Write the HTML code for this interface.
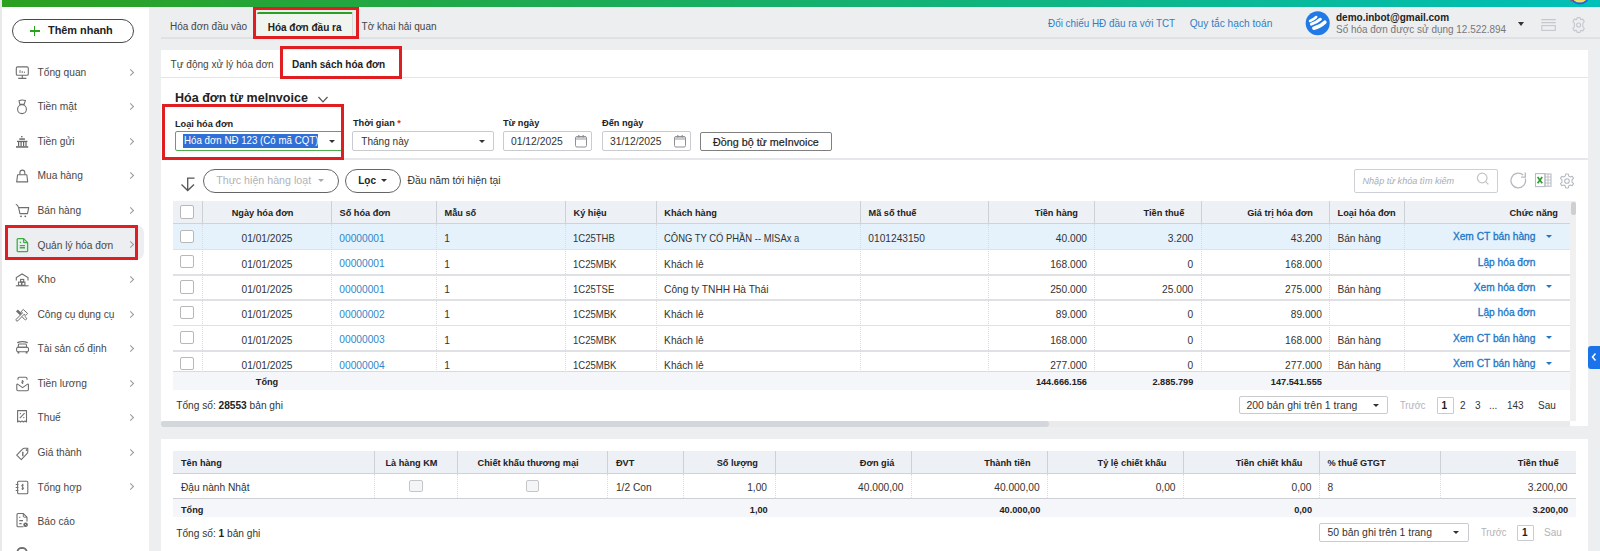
<!DOCTYPE html>
<html><head><meta charset="utf-8">
<style>
*{box-sizing:border-box}
html,body{margin:0;padding:0}
body{width:1600px;height:551px;overflow:hidden;position:relative;background:#edeef0;font-family:"Liberation Sans",sans-serif;color:#212121;font-size:10px}
.a{position:absolute;white-space:nowrap}
.b{font-weight:bold}
#strip{left:0;top:0;width:2px;height:551px;background:#e9e9eb}
#topbar{left:2px;top:0;width:1598px;height:6.6px;background:linear-gradient(90deg,#2ca01f,#00c0b8)}
#side{left:2px;top:7px;width:147px;height:544px;background:#fff}
.hdrline{left:149px;top:37px;width:1451px;height:2px;background:#dfe1e4}
.panel{background:#fff}
.red{border:3px solid #e01e22}
.nav{left:37.5px;font-size:10.2px;color:#474747;line-height:12px}
.chev{left:128.3px;width:5.2px;height:5.2px;border-right:1.1px solid #9a9a9a;border-top:1.1px solid #9a9a9a;transform:rotate(45deg)}
.ico{left:15px;width:14px;height:14px}
.lbl{font-size:9.2px;line-height:12px;color:#222}
.inp{height:19.6px;border:1px solid #c8cbd0;border-radius:2px;background:#fff}
.tri{width:0;height:0;border-left:3px solid transparent;border-right:3px solid transparent;border-top:3.5px solid #333}
.cal{width:12.5px;height:12px;border:1.2px solid #8a8d92;border-top-width:2.6px;border-radius:2px}
.th{top:207.8px;font-size:9.2px;line-height:12px;font-weight:bold;color:#222}
.td{font-size:10.2px;line-height:12px;color:#333}
.lnk{color:#2f87c8}
.act{color:#2176c6;-webkit-text-stroke:0.3px #2176c6}
.cb{width:13.5px;height:13.3px;border:1px solid #b8b8b8;border-radius:2px;background:#fff}
.vd{width:1px;border-left:1px dotted #d9dbde}
.tf{font-size:9.2px;line-height:12px;font-weight:bold;color:#222}
.cb2{width:13.6px;height:12.8px;border:1px solid #c4c6ca;border-radius:2px;background:#f4f5f7}
</style></head><body>
<div id="strip" class="a"></div>
<div id="topbar" class="a"></div>
<div id="side" class="a"></div>
<!-- white panel 1 -->
<div class="a panel" style="left:161px;top:50px;width:1427px;height:371px"></div>
<!-- white panel 2 -->
<div class="a panel" style="left:161px;top:439px;width:1427px;height:112px"></div>


<!-- quick add button -->
<div class="a" style="left:12px;top:19px;width:122px;height:24px;border:1.2px solid #4a4a4a;border-radius:12px"></div>
<div class="a b" style="left:48px;top:23px;font-size:10.9px;line-height:14px;color:#222">Thêm nhanh</div>
<div class="a" style="left:30px;top:30.3px;width:9.7px;height:1.3px;background:#2ca01f"></div>
<div class="a" style="left:34.2px;top:26.1px;width:1.3px;height:9.7px;background:#2ca01f"></div>

<!-- sidebar nav -->
<div class="a" style="left:5px;top:224.5px;width:139px;height:35.5px;background:#eceef1;border-radius:0 8px 8px 0"></div>
<div class="a nav" style="top:66.7px">Tổng quan</div>
<div class="a chev" style="top:69.6px"></div>
<div class="a nav" style="top:101.3px">Tiền mặt</div>
<div class="a chev" style="top:104.2px"></div>
<div class="a nav" style="top:135.8px">Tiền gửi</div>
<div class="a chev" style="top:138.7px"></div>
<div class="a nav" style="top:170.4px">Mua hàng</div>
<div class="a chev" style="top:173.3px"></div>
<div class="a nav" style="top:205.0px">Bán hàng</div>
<div class="a chev" style="top:207.9px"></div>
<div class="a nav" style="top:239.5px">Quản lý hóa đơn</div>
<div class="a chev" style="top:242.4px"></div>
<div class="a nav" style="top:274.1px">Kho</div>
<div class="a chev" style="top:277.0px"></div>
<div class="a nav" style="top:308.7px">Công cụ dụng cụ</div>
<div class="a chev" style="top:311.6px"></div>
<div class="a nav" style="top:343.3px">Tài sản cố định</div>
<div class="a chev" style="top:346.2px"></div>
<div class="a nav" style="top:377.8px">Tiền lương</div>
<div class="a chev" style="top:380.7px"></div>
<div class="a nav" style="top:412.4px">Thuế</div>
<div class="a chev" style="top:415.3px"></div>
<div class="a nav" style="top:447.0px">Giá thành</div>
<div class="a chev" style="top:449.9px"></div>
<div class="a nav" style="top:481.5px">Tổng hợp</div>
<div class="a chev" style="top:484.4px"></div>
<div class="a nav" style="top:516.1px">Báo cáo</div>
<div class="a nav" style="top:550.7px">Hệ thống</div>
<div class="a red" style="left:5px;top:225px;width:133px;height:35px"></div>

<!-- header line -->
<div class="a" style="left:161px;top:37px;width:1439px;height:2px;background:#dfe1e4"></div>
<!-- top tabs -->
<div class="a" style="left:170px;top:20.5px;font-size:10px;line-height:12px;color:#444">Hóa đơn đầu vào</div>
<div class="a" style="left:257px;top:12px;width:96px;height:26px;background:#f1f5ef;border-right:1px solid #d8dcd8;border-top:2px solid #2ca01f;border-radius:2px 2px 0 0"></div>
<div class="a b" style="left:267.7px;top:22.2px;font-size:10px;line-height:12px;color:#222">Hóa đơn đầu ra</div>
<div class="a" style="left:361.6px;top:20.5px;font-size:10px;line-height:12px;color:#444">Tờ khai hải quan</div>
<div class="a red" style="left:253px;top:6.5px;width:106px;height:32.5px"></div>
<!-- top right -->
<div class="a" style="left:1048px;top:17.5px;font-size:10.2px;line-height:12px;color:#2f7fc4;transform:scaleX(0.97);transform-origin:0 0">Đối chiếu HĐ đầu ra với TCT</div>
<div class="a" style="left:1189.7px;top:17.5px;font-size:10.2px;line-height:12px;color:#2f7fc4">Quy tắc hạch toán</div>
<div class="a b" style="left:1336px;top:11.8px;font-size:10px;line-height:12px;color:#222">demo.inbot@gmail.com</div>
<div class="a" style="left:1336px;top:23.5px;font-size:10.2px;line-height:12px;color:#777;transform:scaleX(0.976);transform-origin:0 0">Số hóa đơn được sử dụng 12.522.894</div>
<div class="a" style="left:1518.3px;top:21.6px;width:0;height:0;border-left:3px solid transparent;border-right:3px solid transparent;border-top:4px solid #333"></div>

<!-- sub tabs -->
<div class="a" style="left:161px;top:77px;width:1427px;height:1px;background:#e3e5e8"></div>
<div class="a" style="left:170.6px;top:58.5px;font-size:10.08px;line-height:12px;color:#444">Tự động xử lý hóa đơn</div>
<div class="a b" style="left:292px;top:58.7px;font-size:10px;line-height:12px;color:#222">Danh sách hóa đơn</div>
<div class="a red" style="left:280px;top:46px;width:121.5px;height:32.5px"></div>




<!-- filter section -->
<div class="a b" style="left:175px;top:92.2px;font-size:12.54px;line-height:12px;color:#222">Hóa đơn từ meInvoice</div>
<svg class="a" style="left:317px;top:95px" width="12" height="9" viewBox="0 0 12 9"><path d="M1.5 2 L6 6.8 L10.5 2" fill="none" stroke="#555" stroke-width="1.2"/></svg>
<div class="a" style="left:343px;top:158px;width:1245px;height:1.5px;background:#e6e7ea"></div>

<div class="a b lbl" style="left:175px;top:117.5px">Loại hóa đơn</div>
<div class="a" style="left:174.5px;top:131.2px;width:168px;height:19.8px;border:1px solid #4cb050;border-radius:2px;background:#fff"></div>
<div class="a" style="left:183px;top:134.4px;width:134.7px;height:13.4px;background:#2f6fd6"></div>
<div class="a" style="left:183.5px;top:135.3px;font-size:10.2px;line-height:12px;color:#fff;transform:scaleX(0.954);transform-origin:0 0">Hóa đơn NĐ 123 (Có mã CQT)</div>
<div class="a tri" style="left:329px;top:139.5px"></div>
<div class="a red" style="left:162px;top:104px;width:182px;height:56px"></div>

<div class="a b lbl" style="left:353px;top:117.3px">Thời gian <span style="color:#e5232a">*</span></div>
<div class="a inp" style="left:352.4px;top:131.2px;width:141.2px"></div>
<div class="a" style="left:361.3px;top:135.5px;font-size:10.05px;line-height:12px;color:#333">Tháng này</div>
<div class="a tri" style="left:478.6px;top:139.5px"></div>

<div class="a b lbl" style="left:503px;top:117.3px">Từ ngày</div>
<div class="a inp" style="left:502.7px;top:131.2px;width:89.3px"></div>
<div class="a" style="left:511px;top:135.8px;font-size:10.34px;line-height:12px;color:#333">01/12/2025</div>
<svg class="a" style="left:574px;top:134px" width="14" height="14" viewBox="0 0 14 14"><rect x="1.5" y="2.5" width="11" height="10.5" rx="1.5" fill="#fff" stroke="#8e9096" stroke-width="1"/><rect x="2" y="3" width="10" height="3" fill="#c9cbcf"/><path d="M4.8 1 V3.6 M9.2 1 V3.6" stroke="#8e9096" stroke-width="1.2"/></svg>

<div class="a b lbl" style="left:602px;top:117.3px">Đến ngày</div>
<div class="a inp" style="left:601.6px;top:131.2px;width:89.4px"></div>
<div class="a" style="left:609.9px;top:135.8px;font-size:10.34px;line-height:12px;color:#333">31/12/2025</div>
<svg class="a" style="left:672.5px;top:134px" width="14" height="14" viewBox="0 0 14 14"><rect x="1.5" y="2.5" width="11" height="10.5" rx="1.5" fill="#fff" stroke="#8e9096" stroke-width="1"/><rect x="2" y="3" width="10" height="3" fill="#c9cbcf"/><path d="M4.8 1 V3.6 M9.2 1 V3.6" stroke="#8e9096" stroke-width="1.2"/></svg>

<div class="a" style="left:700px;top:132px;width:132px;height:19.3px;border:1px solid #808080;border-radius:2px"></div>
<div class="a" style="left:713px;top:136px;font-size:10.75px;line-height:12px;color:#222;-webkit-text-stroke:0.2px #222">Đồng bộ từ meInvoice</div>


<!-- toolbar -->
<svg class="a" style="left:180px;top:176px" width="16" height="16" viewBox="0 0 16 16"><path d="M14.5 2.2 H7.7 V14.5 M1.5 8.5 L7.7 14.5 L14 8.5" fill="none" stroke="#555" stroke-width="1.3"/></svg>
<div class="a" style="left:203.2px;top:168.7px;width:135.5px;height:24px;border:1px solid #666;border-radius:12px"></div>
<div class="a" style="left:216.2px;top:174.2px;font-size:10.68px;line-height:12px;color:#b0b3b8">Thực hiện hàng loạt</div>
<div class="a tri" style="left:318px;top:179.2px;border-top-color:#aaa"></div>
<div class="a" style="left:345.2px;top:168.7px;width:55.8px;height:24px;border:1px solid #666;border-radius:12px"></div>
<div class="a b" style="left:358.2px;top:174.5px;font-size:10px;line-height:12px;color:#222">Lọc</div>
<div class="a tri" style="left:381px;top:179.2px"></div>
<div class="a" style="left:407.5px;top:174.5px;font-size:10.37px;line-height:12px;color:#333">Đầu năm tới hiện tại</div>

<div class="a" style="left:1353.6px;top:168.6px;width:144.2px;height:24.2px;border:1px solid #cdd0d5;border-radius:2px"></div>
<div class="a" style="left:1362.5px;top:174.5px;font-size:9.1px;line-height:12px;color:#a9adb3;font-style:italic">Nhập từ khóa tìm kiếm</div>
<svg class="a" style="left:1475px;top:171px" width="16" height="16" viewBox="0 0 16 16"><circle cx="7.2" cy="7" r="4.8" fill="none" stroke="#c3c3c3" stroke-width="1.2"/><path d="M10.6 10.6 L13.4 13.4" stroke="#c3c3c3" stroke-width="1.2"/></svg>
<svg class="a" style="left:1509px;top:171px" width="19" height="19" viewBox="0 0 19 19"><path d="M16.3 7.5 A7.3 7.3 0 1 1 14.2 4.1" fill="none" stroke="#b5bac2" stroke-width="1.3"/><path d="M16.3 1.6 V6.2 H12" fill="none" stroke="#b5bac2" stroke-width="1.3"/></svg>
<svg class="a" style="left:1534px;top:172px" width="18" height="16" viewBox="0 0 18 16"><rect x="1.5" y="1.6" width="9.5" height="13" fill="#fff" stroke="#b8bcc3" stroke-width="1.1"/><rect x="11" y="2" width="6" height="12.2" fill="none" stroke="#b8bcc3" stroke-width="1.1"/><path d="M11 5 H17 M11 8 H17 M11 11 H17 M14 2 V14.2" stroke="#b8bcc3" stroke-width="0.9"/><path d="M3.6 5 L8.2 11.2 M8.2 5 L3.6 11.2" stroke="#2aa02a" stroke-width="1.7"/></svg>
<svg class="a" style="left:1559px;top:172.5px" width="16" height="16" viewBox="0 0 16 16"><path d="M6.7 1 H9.3 L9.7 3 L11.3 3.9 L13.2 3.2 L14.5 5.4 L13 6.8 V9.2 L14.5 10.6 L13.2 12.8 L11.3 12.1 L9.7 13 L9.3 15 H6.7 L6.3 13 L4.7 12.1 L2.8 12.8 L1.5 10.6 L3 9.2 V6.8 L1.5 5.4 L2.8 3.2 L4.7 3.9 L6.3 3 Z" fill="none" stroke="#b5bac2" stroke-width="1.1" stroke-linejoin="round"/><circle cx="8" cy="8" r="2.3" fill="none" stroke="#b5bac2" stroke-width="1.1"/></svg>
<!--T1S-->
<!-- main table -->
<div class="a" style="left:173px;top:201px;width:1397px;height:23px;background:#edf0f4;border-bottom:1px solid #cfd2d7"></div>
<div class="a" style="left:173px;top:224px;width:1397px;height:24.8px;background:#e5f2fc"></div>
<div class="a" style="left:173px;top:248.60px;width:1397px;height:1.6px;background:#dfe1e4"></div>
<div class="a" style="left:173px;top:274.00px;width:1397px;height:1.6px;background:#dfe1e4"></div>
<div class="a" style="left:173px;top:299.40px;width:1397px;height:1.6px;background:#dfe1e4"></div>
<div class="a" style="left:173px;top:324.80px;width:1397px;height:1.6px;background:#dfe1e4"></div>
<div class="a" style="left:173px;top:350.20px;width:1397px;height:1.6px;background:#dfe1e4"></div>
<div class="a" style="left:202.0px;top:201px;width:1px;height:22px;background:#cdd1d6"></div>
<div class="a vd" style="left:202.0px;top:224px;height:147.7px"></div>
<div class="a" style="left:331.0px;top:201px;width:1px;height:22px;background:#cdd1d6"></div>
<div class="a vd" style="left:331.0px;top:224px;height:147.7px"></div>
<div class="a" style="left:436.0px;top:201px;width:1px;height:22px;background:#cdd1d6"></div>
<div class="a vd" style="left:436.0px;top:224px;height:147.7px"></div>
<div class="a" style="left:565.0px;top:201px;width:1px;height:22px;background:#cdd1d6"></div>
<div class="a vd" style="left:565.0px;top:224px;height:147.7px"></div>
<div class="a" style="left:655.8px;top:201px;width:1px;height:22px;background:#cdd1d6"></div>
<div class="a vd" style="left:655.8px;top:224px;height:147.7px"></div>
<div class="a" style="left:860.0px;top:201px;width:1px;height:22px;background:#cdd1d6"></div>
<div class="a vd" style="left:860.0px;top:224px;height:147.7px"></div>
<div class="a" style="left:988.1px;top:201px;width:1px;height:22px;background:#cdd1d6"></div>
<div class="a vd" style="left:988.1px;top:224px;height:147.7px"></div>
<div class="a" style="left:1094.2px;top:201px;width:1px;height:22px;background:#cdd1d6"></div>
<div class="a vd" style="left:1094.2px;top:224px;height:147.7px"></div>
<div class="a" style="left:1200.5px;top:201px;width:1px;height:22px;background:#cdd1d6"></div>
<div class="a vd" style="left:1200.5px;top:224px;height:147.7px"></div>
<div class="a" style="left:1329.1px;top:201px;width:1px;height:22px;background:#cdd1d6"></div>
<div class="a vd" style="left:1329.1px;top:224px;height:147.7px"></div>
<div class="a" style="left:1403.9px;top:201px;width:1px;height:22px;background:#cdd1d6"></div>
<div class="a vd" style="left:1403.9px;top:224px;height:147.7px"></div>
<div class="a th" style="left:202.5px;width:120.0px;text-align:center;top:206.9px">Ngày hóa đơn</div>
<div class="a th" style="left:339.5px;top:206.9px">Số hóa đơn</div>
<div class="a th" style="left:444.5px;top:206.9px">Mẫu số</div>
<div class="a th" style="left:573.5px;top:206.9px">Ký hiệu</div>
<div class="a th" style="left:664.3px;top:206.9px">Khách hàng</div>
<div class="a th" style="left:868.5px;top:206.9px">Mã số thuế</div>
<div class="a th" style="left:988.6px;width:89.4px;text-align:right;top:206.9px">Tiền hàng</div>
<div class="a th" style="left:1094.7px;width:89.6px;text-align:right;top:206.9px">Tiền thuế</div>
<div class="a th" style="left:1201.0px;width:111.9px;text-align:right;top:206.9px">Giá trị hóa đơn</div>
<div class="a th" style="left:1337.6px;top:206.9px">Loại hóa đơn</div>
<div class="a th" style="left:1404.4px;width:153.6px;text-align:right;top:206.9px">Chức năng</div>
<div class="a cb" style="left:180.2px;top:205.3px"></div>
<div class="a cb" style="left:180.2px;top:229.5px"></div>
<div class="a td" style="left:202.5px;width:129.0px;text-align:center;top:233.2px">01/01/2025</div>
<div class="a td lnk" style="left:339.3px;top:232.7px;">00000001</div>
<div class="a td" style="left:444.3px;top:233.2px;">1</div>
<div class="a td" style="left:573.3px;top:233.2px;transform:scaleX(0.935);transform-origin:0 0;">1C25THB</div>
<div class="a td" style="left:664.1px;top:233.2px;transform:scaleX(0.925);transform-origin:0 0;">CÔNG TY CỔ PHẦN -- MISAx a</div>
<div class="a td" style="left:868.3px;top:233.2px;">0101243150</div>
<div class="a td" style="left:988.6px;width:98.4px;text-align:right;top:233.2px">40.000</div>
<div class="a td" style="left:1094.7px;width:98.6px;text-align:right;top:233.2px">3.200</div>
<div class="a td" style="left:1201.0px;width:120.9px;text-align:right;top:233.2px">43.200</div>
<div class="a td" style="left:1337.4px;top:233.2px;">Bán hàng</div>
<div class="a td act" style="left:1404.4px;width:131.0px;text-align:right;top:231.2px">Xem CT bán hàng</div>
<div class="a tri" style="left:1546.4px;top:234.5px;border-top-color:#2176c6;border-left-width:3px;border-right-width:3px;border-top-width:3.6px"></div>
<div class="a cb" style="left:180.2px;top:254.9px"></div>
<div class="a td" style="left:202.5px;width:129.0px;text-align:center;top:258.6px">01/01/2025</div>
<div class="a td lnk" style="left:339.3px;top:258.1px;">00000001</div>
<div class="a td" style="left:444.3px;top:258.6px;">1</div>
<div class="a td" style="left:573.3px;top:258.6px;transform:scaleX(0.935);transform-origin:0 0;">1C25MBK</div>
<div class="a td" style="left:664.1px;top:258.6px;">Khách lẻ</div>
<div class="a td" style="left:988.6px;width:98.4px;text-align:right;top:258.6px">168.000</div>
<div class="a td" style="left:1094.7px;width:98.6px;text-align:right;top:258.6px">0</div>
<div class="a td" style="left:1201.0px;width:120.9px;text-align:right;top:258.6px">168.000</div>
<div class="a td act" style="left:1404.4px;width:131.0px;text-align:right;top:256.6px">Lập hóa đơn</div>
<div class="a cb" style="left:180.2px;top:280.3px"></div>
<div class="a td" style="left:202.5px;width:129.0px;text-align:center;top:284.0px">01/01/2025</div>
<div class="a td lnk" style="left:339.3px;top:283.5px;">00000001</div>
<div class="a td" style="left:444.3px;top:284.0px;">1</div>
<div class="a td" style="left:573.3px;top:284.0px;transform:scaleX(0.935);transform-origin:0 0;">1C25TSE</div>
<div class="a td" style="left:664.1px;top:284.0px;">Công ty TNHH Hà Thái</div>
<div class="a td" style="left:988.6px;width:98.4px;text-align:right;top:284.0px">250.000</div>
<div class="a td" style="left:1094.7px;width:98.6px;text-align:right;top:284.0px">25.000</div>
<div class="a td" style="left:1201.0px;width:120.9px;text-align:right;top:284.0px">275.000</div>
<div class="a td" style="left:1337.4px;top:284.0px;">Bán hàng</div>
<div class="a td act" style="left:1404.4px;width:131.0px;text-align:right;top:282.0px">Xem hóa đơn</div>
<div class="a tri" style="left:1546.4px;top:285.3px;border-top-color:#2176c6;border-left-width:3px;border-right-width:3px;border-top-width:3.6px"></div>
<div class="a cb" style="left:180.2px;top:305.7px"></div>
<div class="a td" style="left:202.5px;width:129.0px;text-align:center;top:309.4px">01/01/2025</div>
<div class="a td lnk" style="left:339.3px;top:308.9px;">00000002</div>
<div class="a td" style="left:444.3px;top:309.4px;">1</div>
<div class="a td" style="left:573.3px;top:309.4px;transform:scaleX(0.935);transform-origin:0 0;">1C25MBK</div>
<div class="a td" style="left:664.1px;top:309.4px;">Khách lẻ</div>
<div class="a td" style="left:988.6px;width:98.4px;text-align:right;top:309.4px">89.000</div>
<div class="a td" style="left:1094.7px;width:98.6px;text-align:right;top:309.4px">0</div>
<div class="a td" style="left:1201.0px;width:120.9px;text-align:right;top:309.4px">89.000</div>
<div class="a td act" style="left:1404.4px;width:131.0px;text-align:right;top:307.4px">Lập hóa đơn</div>
<div class="a cb" style="left:180.2px;top:331.1px"></div>
<div class="a td" style="left:202.5px;width:129.0px;text-align:center;top:334.8px">01/01/2025</div>
<div class="a td lnk" style="left:339.3px;top:334.3px;">00000003</div>
<div class="a td" style="left:444.3px;top:334.8px;">1</div>
<div class="a td" style="left:573.3px;top:334.8px;transform:scaleX(0.935);transform-origin:0 0;">1C25MBK</div>
<div class="a td" style="left:664.1px;top:334.8px;">Khách lẻ</div>
<div class="a td" style="left:988.6px;width:98.4px;text-align:right;top:334.8px">168.000</div>
<div class="a td" style="left:1094.7px;width:98.6px;text-align:right;top:334.8px">0</div>
<div class="a td" style="left:1201.0px;width:120.9px;text-align:right;top:334.8px">168.000</div>
<div class="a td" style="left:1337.4px;top:334.8px;">Bán hàng</div>
<div class="a td act" style="left:1404.4px;width:131.0px;text-align:right;top:332.8px">Xem CT bán hàng</div>
<div class="a tri" style="left:1546.4px;top:336.1px;border-top-color:#2176c6;border-left-width:3px;border-right-width:3px;border-top-width:3.6px"></div>
<div class="a cb" style="left:180.2px;top:356.5px"></div>
<div class="a td" style="left:202.5px;width:129.0px;text-align:center;top:360.2px">01/01/2025</div>
<div class="a td lnk" style="left:339.3px;top:359.7px;">00000004</div>
<div class="a td" style="left:444.3px;top:360.2px;">1</div>
<div class="a td" style="left:573.3px;top:360.2px;transform:scaleX(0.935);transform-origin:0 0;">1C25MBK</div>
<div class="a td" style="left:664.1px;top:360.2px;">Khách lẻ</div>
<div class="a td" style="left:988.6px;width:98.4px;text-align:right;top:360.2px">277.000</div>
<div class="a td" style="left:1094.7px;width:98.6px;text-align:right;top:360.2px">0</div>
<div class="a td" style="left:1201.0px;width:120.9px;text-align:right;top:360.2px">277.000</div>
<div class="a td" style="left:1337.4px;top:360.2px;">Bán hàng</div>
<div class="a td act" style="left:1404.4px;width:131.0px;text-align:right;top:358.2px">Xem CT bán hàng</div>
<div class="a tri" style="left:1546.4px;top:361.5px;border-top-color:#2176c6;border-left-width:3px;border-right-width:3px;border-top-width:3.6px"></div>
<div class="a" style="left:173px;top:371px;width:1397px;height:18.5px;background:#f5f6fa;border-top:1.4px solid #d8dadd"></div>
<div class="a tf" style="left:202.5px;width:129px;text-align:center;top:376px">Tổng</div>
<div class="a tf" style="left:988.6px;width:98.4px;text-align:right;top:376px">144.666.156</div>
<div class="a tf" style="left:1094.7px;width:98.6px;text-align:right;top:376px">2.885.799</div>
<div class="a tf" style="left:1201.0px;width:120.9px;text-align:right;top:376px">147.541.555</div>
<div class="a" style="left:1570px;top:201px;width:6px;height:220px;background:#f0f0f0"></div>
<div class="a" style="left:1571px;top:202px;width:4.5px;height:13px;background:#cfcfd2;border-radius:2px"></div>
<!--T1E-->

<!-- summary + pagination -->
<div class="a" style="left:176.2px;top:399.6px;font-size:10.16px;line-height:12px;color:#333">Tổng số: <b style="color:#222">28553</b> bản ghi</div>
<div class="a" style="left:1238.6px;top:395.8px;width:149.4px;height:18.7px;border:1px solid #c8cbd0;border-radius:2px"></div>
<div class="a" style="left:1246.5px;top:399.5px;font-size:10.45px;line-height:12px;color:#333">200 bản ghi trên 1 trang</div>
<div class="a tri" style="left:1372.5px;top:403.5px"></div>
<div class="a" style="left:1400px;top:399.5px;font-size:10.2px;line-height:12px;color:#b0b3b8;transform:scaleX(0.912);transform-origin:0 0">Trước</div>
<div class="a" style="left:1436.6px;top:397px;width:17.4px;height:16.5px;border:1px solid #c8cbd0;border-radius:1px"></div>
<div class="a b" style="left:1441.5px;top:399.5px;font-size:10px;line-height:12px;color:#222">1</div>
<div class="a" style="left:1460px;top:399.5px;font-size:10px;line-height:12px;color:#333">2</div>
<div class="a" style="left:1475px;top:399.5px;font-size:10px;line-height:12px;color:#333">3</div>
<div class="a" style="left:1489px;top:399.5px;font-size:10px;line-height:12px;color:#333">...</div>
<div class="a" style="left:1507px;top:399.5px;font-size:10px;line-height:12px;color:#333">143</div>
<div class="a" style="left:1538px;top:399.5px;font-size:10px;line-height:12px;color:#333">Sau</div>
<!-- hscroll -->
<div class="a" style="left:161px;top:420.8px;width:1409px;height:6px;background:#eaeaea"></div>
<div class="a" style="left:1570px;top:420.8px;width:18px;height:5.4px;background:#fff"></div>
<div class="a" style="left:161px;top:420.8px;width:888px;height:6px;background:#d3d6db;border-radius:3px"></div>
<!-- right blue tab -->
<div class="a" style="left:1588px;top:345.5px;width:12px;height:23.3px;background:#1a73e8;border-radius:3px 0 0 3px"></div>
<svg class="a" style="left:1590px;top:352px" width="8" height="10" viewBox="0 0 8 10"><path d="M5.5 1.5 L2.5 5 L5.5 8.5" fill="none" stroke="#fff" stroke-width="1.5"/></svg>

<!--T2S-->
<!-- detail table -->
<div class="a" style="left:173px;top:451px;width:1402.5px;height:22.6px;background:#edf0f4;border-bottom:1px solid #cfd2d7"></div>
<div class="a" style="left:173px;top:498px;width:1402.5px;height:18.8px;background:#f5f6fa;border-top:1.6px solid #cdd0d4"></div>
<div class="a" style="left:374.1px;top:451px;width:1px;height:21.6px;background:#cdd1d6"></div>
<div class="a vd" style="left:374.1px;top:473.6px;height:24.4px"></div>
<div class="a" style="left:456.8px;top:451px;width:1px;height:21.6px;background:#cdd1d6"></div>
<div class="a vd" style="left:456.8px;top:473.6px;height:24.4px"></div>
<div class="a" style="left:607.4px;top:451px;width:1px;height:21.6px;background:#cdd1d6"></div>
<div class="a vd" style="left:607.4px;top:473.6px;height:24.4px"></div>
<div class="a" style="left:683.3px;top:451px;width:1px;height:21.6px;background:#cdd1d6"></div>
<div class="a vd" style="left:683.3px;top:473.6px;height:24.4px"></div>
<div class="a" style="left:774.5px;top:451px;width:1px;height:21.6px;background:#cdd1d6"></div>
<div class="a vd" style="left:774.5px;top:473.6px;height:24.4px"></div>
<div class="a" style="left:910.9px;top:451px;width:1px;height:21.6px;background:#cdd1d6"></div>
<div class="a vd" style="left:910.9px;top:473.6px;height:24.4px"></div>
<div class="a" style="left:1047.1px;top:451px;width:1px;height:21.6px;background:#cdd1d6"></div>
<div class="a vd" style="left:1047.1px;top:473.6px;height:24.4px"></div>
<div class="a" style="left:1183.0px;top:451px;width:1px;height:21.6px;background:#cdd1d6"></div>
<div class="a vd" style="left:1183.0px;top:473.6px;height:24.4px"></div>
<div class="a" style="left:1318.9px;top:451px;width:1px;height:21.6px;background:#cdd1d6"></div>
<div class="a vd" style="left:1318.9px;top:473.6px;height:24.4px"></div>
<div class="a" style="left:1439.5px;top:451px;width:1px;height:21.6px;background:#cdd1d6"></div>
<div class="a vd" style="left:1439.5px;top:473.6px;height:24.4px"></div>
<div class="a th" style="left:181.0px;top:457.2px">Tên hàng</div>
<div class="a th" style="left:374.6px;width:73.7px;text-align:center;top:457.2px">Là hàng KM</div>
<div class="a th" style="left:457.3px;width:141.6px;text-align:center;top:457.2px">Chiết khấu thương mại</div>
<div class="a th" style="left:615.9px;top:457.2px">ĐVT</div>
<div class="a th" style="left:683.8px;width:74.2px;text-align:right;top:457.2px">Số lượng</div>
<div class="a th" style="left:775.0px;width:119.4px;text-align:right;top:457.2px">Đơn giá</div>
<div class="a th" style="left:911.4px;width:119.2px;text-align:right;top:457.2px">Thành tiền</div>
<div class="a th" style="left:1047.6px;width:118.9px;text-align:right;top:457.2px">Tỷ lệ chiết khấu</div>
<div class="a th" style="left:1183.5px;width:118.9px;text-align:right;top:457.2px">Tiền chiết khấu</div>
<div class="a th" style="left:1327.4px;top:457.2px">% thuế GTGT</div>
<div class="a th" style="left:1440.0px;width:118.5px;text-align:right;top:457.2px">Tiền thuế</div>
<div class="a td" style="left:181.0px;top:482.1px">Đậu nành Nhật</div>
<div class="a cb2" style="left:409.2px;top:479.5px"></div>
<div class="a cb2" style="left:525.8px;top:479.5px"></div>
<div class="a td" style="left:615.9px;top:482.1px">1/2 Con</div>
<div class="a td" style="left:683.8px;width:83.2px;text-align:right;top:482.1px">1,00</div>
<div class="a td" style="left:775.0px;width:128.4px;text-align:right;top:482.1px">40.000,00</div>
<div class="a td" style="left:911.4px;width:128.2px;text-align:right;top:482.1px">40.000,00</div>
<div class="a td" style="left:1047.6px;width:127.9px;text-align:right;top:482.1px">0,00</div>
<div class="a td" style="left:1183.5px;width:127.9px;text-align:right;top:482.1px">0,00</div>
<div class="a td" style="left:1327.4px;top:482.1px">8</div>
<div class="a td" style="left:1440.0px;width:127.5px;text-align:right;top:482.1px">3.200,00</div>
<div class="a tf" style="left:181.0px;top:503.9px">Tổng</div>
<div class="a tf" style="left:683.8px;width:83.9px;text-align:right;top:503.9px">1,00</div>
<div class="a tf" style="left:911.4px;width:128.9px;text-align:right;top:503.9px">40.000,00</div>
<div class="a tf" style="left:1183.5px;width:128.6px;text-align:right;top:503.9px">0,00</div>
<div class="a tf" style="left:1440.0px;width:128.2px;text-align:right;top:503.9px">3.200,00</div>
<div class="a" style="left:176.2px;top:527.8px;font-size:10.16px;line-height:12px;color:#333">Tổng số: <b style="color:#222">1</b> bản ghi</div>
<div class="a" style="left:1318.6px;top:523px;width:150px;height:19.4px;border:1px solid #c8cbd0;border-radius:2px"></div>
<div class="a" style="left:1327.5px;top:527px;font-size:10.38px;line-height:12px;color:#333">50 bản ghi trên 1 trang</div>
<div class="a tri" style="left:1453px;top:531px"></div>
<div class="a" style="left:1481px;top:527px;font-size:10.2px;line-height:12px;color:#b0b3b8;transform:scaleX(0.914);transform-origin:0 0">Trước</div>
<div class="a" style="left:1517px;top:524.5px;width:16.5px;height:16.5px;border:1px solid #c8cbd0;border-radius:1px"></div>
<div class="a b" style="left:1522px;top:527px;font-size:10px;line-height:12px;color:#222">1</div>
<div class="a" style="left:1544px;top:527px;font-size:10px;line-height:12px;color:#b0b3b8">Sau</div>
<!--T2E-->


<!-- sidebar icons -->
<svg class="a" style="left:0;top:0" width="40" height="551" viewBox="0 0 40 551" fill="none" stroke="#6e6e6e" stroke-width="1.1">
<rect x="16.3" y="66.9" width="12" height="8.3" rx="1.3"/>
<path d="M22.3 75.2 V78.2 M18.2 78.4 H26.4"/>
<path d="M20 73 V70 M22.2 73 V71 M24.4 73 V71.6" stroke-width="0.9"/>
<path d="M19 100.8 Q22 99.3 25.4 100.6 L24.1 104.4 H19.9 Z"/>
<circle cx="22" cy="109.2" r="4.4"/>
<g fill="#666" stroke="none">
<rect x="21" y="136.1" width="1.6" height="1.2"/>
<rect x="19.3" y="138.3" width="5.6" height="1.5"/>
<rect x="17" y="140.8" width="10.4" height="1.3"/>
<rect x="18" y="142" width="1.2" height="4.2"/><rect x="20.5" y="142" width="1.2" height="4.2"/><rect x="23" y="142" width="1.2" height="4.2"/><rect x="25.4" y="142" width="1.2" height="4.2"/>
<rect x="16" y="146.2" width="12.2" height="1.5"/>
</g>
<path d="M19.9 174.7 V172.6 A2.45 2.45 0 0 1 24.8 172.6 V174.7"/>
<path d="M17.6 174.8 H26.8 L27.7 181.9 H16.7 Z" stroke-linejoin="round"/>
<path d="M15.8 204.2 Q17.8 204.6 18.6 207.6 L19.9 213.6 H27.5 L28.7 207.6 H18.6" stroke-linejoin="round"/>
<circle cx="21" cy="216.3" r="0.9" fill="#666" stroke="none"/><circle cx="25.3" cy="216.3" r="0.9" fill="#666" stroke="none"/>
<g stroke="#3cb043" stroke-width="1.3">
<path d="M18.1 238.6 H23.6 L27.6 242.6 V250.7 Q27.6 251.6 26.7 251.6 H18.1 Q17.2 251.6 17.2 250.7 V239.5 Q17.2 238.6 18.1 238.6 Z" stroke-linejoin="round"/>
<path d="M23.6 238.6 V241.7 Q23.6 242.6 24.5 242.6 H27.6"/>
<path d="M19.7 245.6 H25 M19.7 247.8 H25" stroke-width="1.4"/>
<path d="M19.8 242.3 H21"/>
</g>
<path d="M16.3 280.4 V277.6 L22.1 274 L28 277.6 V280.4"/>
<rect x="20.6" y="279.4" width="3.1" height="2.7"/>
<rect x="18.5" y="282.1" width="3.2" height="3.2"/><rect x="21.7" y="282.1" width="3.2" height="3.2"/>
<path d="M15.8 285.8 H28.6"/>
<path d="M16.2 319.3 L22.4 313.1 L21.3 311.3 L23.3 309.5 L27.7 313.5 L25.7 315.4 L24.2 314.2 L17.9 320.8 Q16.8 321.6 16.2 320.6 Q15.9 320 16.2 319.3 Z" stroke-width="1" stroke-linejoin="round"/>
<path d="M16.9 310.5 L20.9 314.3" stroke-width="2.6"/>
<path d="M22.3 316.9 L24.3 319.2 Q25.5 320.4 26.4 319.3 Q27 318.3 25.9 317.3 L24.4 315.9" stroke-width="1"/>
<path d="M17.2 342.6 Q22.4 340.6 27.7 342.6" stroke-width="1.3"/>
<path d="M18.7 344 H26.1 L26.8 347.2 H18 Z" stroke-linejoin="round"/>
<rect x="16.6" y="347.2" width="11.9" height="4.6" rx="1.6"/>
<path d="M18.4 351.8 V353.6 M26.6 351.8 V353.6" stroke-width="1.8"/>
<path d="M18 379.7 V378.4 Q18 377.3 19.2 377.3 H25.8 Q27 377.3 27 378.4 V379.7"/>
<path d="M22.5 380 V384 M21.5 381.2 Q22.5 380.2 23.4 381 Q23.6 382 22.5 382 Q21.4 382.2 21.6 383 Q22.4 383.8 23.5 382.9" stroke-width="0.8"/>
<path d="M16.8 384.6 V389.6 Q16.8 390.8 18 390.8 H27.2 Q28.4 390.8 28.4 389.6 V384.6 Q28 383.8 27.2 384.4 L22.6 387.6 L18 384.4 Q17.2 383.8 16.8 384.6 Z" stroke-linejoin="round"/>
<path d="M17.6 410.6 H26.5 V422 L25 421 L23.5 422 L22 421 L20.5 422 L19 421 L17.6 422 Z" stroke-linejoin="round"/>
<path d="M19.8 418.2 L24.6 413.2"/>
<circle cx="20.4" cy="413.6" r="0.7" fill="#666" stroke="none"/><circle cx="23.8" cy="417.6" r="0.7" fill="#666" stroke="none"/>
<path d="M16.7 455.2 L22.5 449.2 Q23.3 448.3 24.4 448.3 H27.8 V451.8 Q27.8 452.9 27 453.7 L21.3 459.6 Z" stroke-linejoin="round"/>
<path d="M26 449.5 L27.2 450.6" stroke-width="1.6"/>
<path d="M22.8 451.8 V456.2" stroke-width="1.5" stroke="#777"/>
<rect x="17.6" y="481.3" width="10.2" height="12.4" rx="1"/>
<path d="M15.7 484.5 H18.4 M15.7 487.5 H18.4 M15.7 490.5 H18.4" stroke-width="1.2"/>
<path d="M23.9 485.3 Q22.8 484.4 21.8 485.2 Q21.2 486.3 22.6 487 Q24 487.6 23.6 488.8 Q22.6 489.7 21.4 488.8 M22.6 483.8 V490" stroke-width="0.9"/>
<path d="M23.5 526.8 H18 Q17 526.8 17 525.8 V514.5 Q17 513.5 18 513.5 H23.3 L27 517.2 V521.5"/>
<path d="M23.3 513.5 V516.2 Q23.3 517.2 24.3 517.2 H27" stroke-width="1"/>
<path d="M19.3 517.4 H20.3 M19.3 520.6 H23 M19.3 523.6 H21.6" stroke-width="1.1"/>
<circle cx="25.6" cy="524.8" r="2.3" fill="#666" stroke="none"/>
<path d="M24.9 523.8 L26.3 525.4" stroke="#fff" stroke-width="0.7"/>
<path d="M17 553 Q17.5 548 22 547.9 Q26.5 548 27.2 553" stroke-width="1.6"/>
</svg>
<!-- avatar logo -->
<svg class="a" style="left:1305px;top:11px" width="25" height="25" viewBox="0 0 25 25">
<circle cx="12.7" cy="12.2" r="12" fill="#2079e6"/>
<path d="M5 10 Q8.6 8.6 11.2 6" stroke="#fff" stroke-width="2.5" stroke-linecap="round" fill="none"/>
<path d="M6.4 13.2 Q11.6 11.6 15.4 8.2" stroke="#fff" stroke-width="2.9" stroke-linecap="round" fill="none"/>
<path d="M8.8 17.2 Q15.2 15.6 19.9 11.2" stroke="#fff" stroke-width="3.5" stroke-linecap="round" fill="none"/>
</svg>
<!-- header menu + gear -->
<svg class="a" style="left:1538px;top:14px" width="50" height="22" viewBox="1538 14 50 22" fill="none" stroke="#c3c7ce" stroke-width="1.1">
<path d="M1541.3 19.6 H1555.8 M1541.3 22.6 H1555.8"/>
<rect x="1541.8" y="25.6" width="13.5" height="4.8"/>
<path d="M1577.2 17.6 H1580 L1580.8 19.7 L1582.8 19.1 L1584.3 21.5 L1582.8 23.4 V26.6 L1584.3 28.5 L1582.8 30.9 L1580.8 30.3 L1580 32.4 H1577.2 L1576.4 30.3 L1574.4 30.9 L1572.9 28.5 L1574.4 26.6 V23.4 L1572.9 21.5 L1574.4 19.1 L1576.4 19.7 Z" stroke-linejoin="round"/>
<circle cx="1578.6" cy="25" r="2"/>
</svg>
<!-- partial icon at top right -->
<svg class="a" style="left:1565px;top:0" width="30" height="8" viewBox="1565 0 30 8">
<ellipse cx="1579.8" cy="-4" rx="8.6" ry="7.5" fill="#f3dc5a" stroke="#1c62f0" stroke-width="1.8"/>
<circle cx="1571.5" cy="0.4" r="1" fill="#e53030"/>
</svg>

</body></html>
